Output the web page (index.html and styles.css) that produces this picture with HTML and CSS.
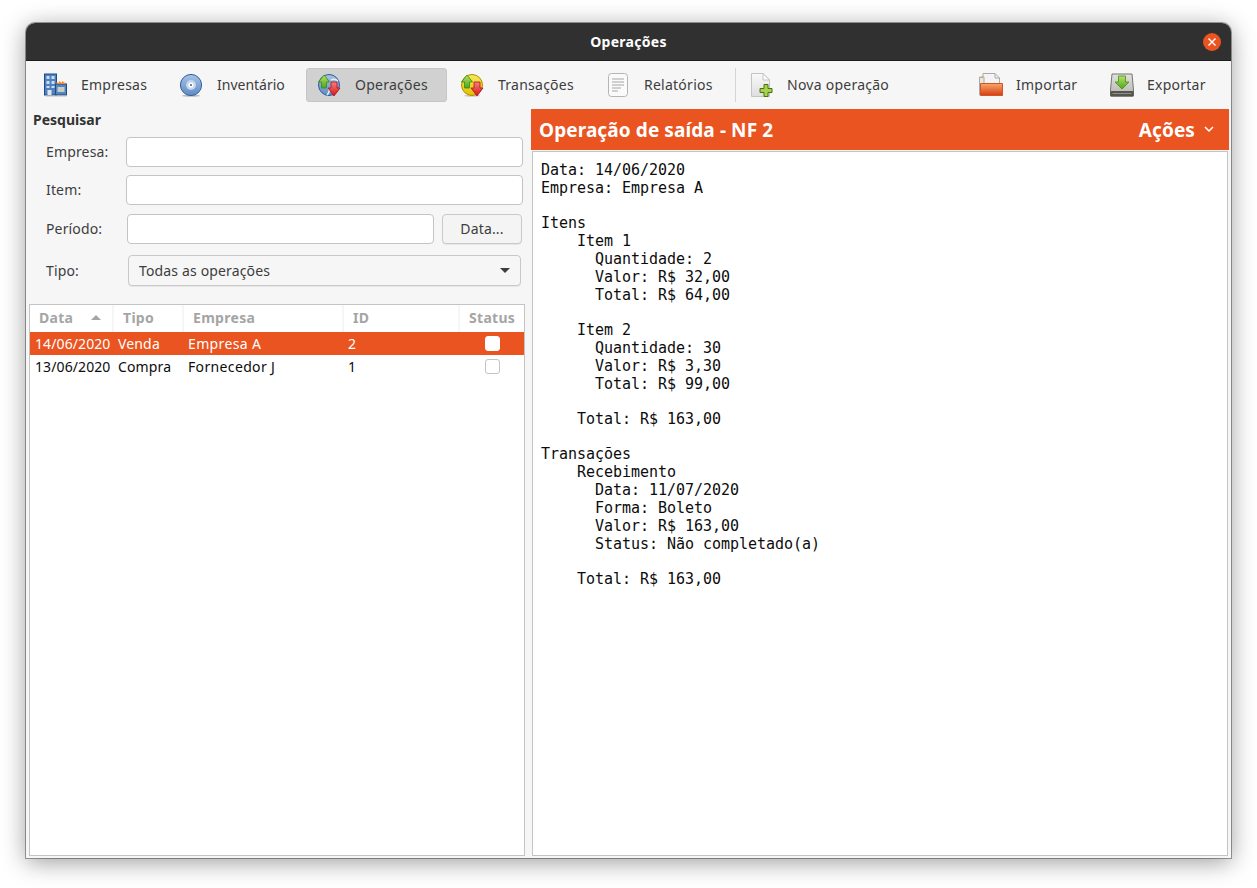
FILE: index.html
```html
<!DOCTYPE html>
<html lang="pt-BR">
<head>
<meta charset="utf-8">
<title>Operações</title>
<link rel="stylesheet" href="styles.css">
</head>
<body>
<svg class="defs" width="0" height="0" aria-hidden="true">
  <defs>
    <linearGradient id="gBlue" x1="0" y1="0" x2="0" y2="1"><stop offset="0" stop-color="#a9c3e4"/><stop offset="1" stop-color="#5f8bc6"/></linearGradient>
    <linearGradient id="gYellow" x1="0" y1="0" x2="0" y2="1"><stop offset="0" stop-color="#f8ea5a"/><stop offset="1" stop-color="#e0bf00"/></linearGradient>
    <linearGradient id="gGreen" x1="0" y1="0" x2="0" y2="1"><stop offset="0" stop-color="#b4e36c"/><stop offset="1" stop-color="#4ea51c"/></linearGradient>
    <linearGradient id="gRed" x1="0" y1="0" x2="0" y2="1"><stop offset="0" stop-color="#f2827c"/><stop offset="1" stop-color="#d9141a"/></linearGradient>
    <linearGradient id="gOrange" x1="0" y1="0" x2="0" y2="1"><stop offset="0" stop-color="#f8a868"/><stop offset="1" stop-color="#d63c14"/></linearGradient>
    <linearGradient id="gGray" x1="0" y1="0" x2="0" y2="1"><stop offset="0" stop-color="#e2e2de"/><stop offset="1" stop-color="#b4b4b0"/></linearGradient>
    <linearGradient id="gPage" x1="0" y1="0" x2="0" y2="1"><stop offset="0" stop-color="#fafafa"/><stop offset="1" stop-color="#dedede"/></linearGradient>
  </defs>
</svg>
<div class="window">
  <header class="titlebar">
    <span class="title">Operações</span>
    <span class="close"><svg width="10" height="10" viewBox="0 0 10 10"><path d="M1.5 1.5l7 7M8.5 1.5l-7 7" stroke="#fff" stroke-width="1.4" fill="none"/></svg></span>
  </header>
  <nav class="toolbar">
    <div class="tool w-emp">
      <svg class="ic" viewBox="0 0 24 24"><g transform="translate(-.5 0)"><rect x="1" y="1" width="12" height="21" fill="#4f80c0" stroke="#1f4a85"/><rect x="12" y="11" width="11" height="11" fill="#5585bd" stroke="#1f4a85"/><path d="M13 11V9l2 1 1-2 2 2 1-2 2 2 1-1v2z" fill="#ef8a2c"/><g fill="#c9dcf0"><rect x="3" y="3" width="3" height="3"/><rect x="8" y="3" width="3" height="3"/><rect x="3" y="8" width="3" height="3"/><rect x="8" y="8" width="3" height="3"/><rect x="3" y="13" width="3" height="2"/><rect x="8" y="13" width="3" height="2"/></g><rect x="4" y="17" width="4" height="5" fill="#dfe5ea"/><rect x="14" y="14" width="7" height="5" fill="#c8ccc8"/><rect x="2" y="22.500" width="21" height="1" fill="#bbb"/></g></svg>
      <span class="lbl">Empresas</span>
    </div>
    <div class="tool w-inv">
      <svg class="ic" viewBox="0 0 24 24"><g transform="translate(-1 0)"><ellipse cx="12" cy="22.800" rx="9" ry="1" fill="#bbb"/><circle cx="12" cy="12" r="10.600" fill="url(#gBlue)" stroke="#33609e"/><circle cx="12" cy="12" r="5" fill="#c4d6ec"/><circle cx="12" cy="12" r="2.600" fill="#fff"/><circle cx="12" cy="12" r="1.100" fill="#3e6aa6"/></g></svg>
      <span class="lbl">Inventário</span>
    </div>
    <div class="tool w-ope active">
      <svg class="ic" viewBox="0 0 24 24"><g transform="translate(-1 0)"><circle cx="12" cy="12" r="10.500" fill="url(#gBlue)" stroke="#2f5a94"/><path d="M14 7q4-2 7 1M12 15q1 4-2 7" fill="none" stroke="#e4ecf5" stroke-width="1.600"/><path d="M7 2L12.500 9H9.500V15H4.500V9H1.500z" fill="url(#gGreen)" stroke="#3c8a14" stroke-width=".8"/><path d="M17 23L23 15H20V9H14V15H11z" fill="url(#gRed)" stroke="#b20f14" stroke-width=".8"/></g></svg>
      <span class="lbl">Operações</span>
    </div>
    <div class="tool w-tra">
      <svg class="ic" viewBox="0 0 24 24"><g transform="translate(-1 0)"><ellipse cx="12" cy="22.800" rx="8" ry="1" fill="#ccc"/><circle cx="12" cy="12" r="10.500" fill="url(#gYellow)" stroke="#b08d00"/><path d="M7 2L12.500 9H9.500V15H4.500V9H1.500z" fill="url(#gGreen)" stroke="#3c8a14" stroke-width=".8"/><path d="M17 23L23 15H20V9H14V15H11z" fill="url(#gRed)" stroke="#b20f14" stroke-width=".8"/></g></svg>
      <span class="lbl">Transações</span>
    </div>
    <div class="tool w-rel">
      <svg class="ic" viewBox="0 0 24 24"><rect x="1.500" y=".5" width="19" height="23" rx="3" fill="#fafafa" stroke="#b5b5b5"/><path d="M5 6h12M5 9h12M5 12h12M5 15h9M5 18h6" stroke="#a6a6a6" stroke-width="1" fill="none"/></svg>
      <span class="lbl">Relatórios</span>
    </div>
    <span class="sep"></span>
    <div class="tool w-nov">
      <svg class="ic" viewBox="0 0 24 24"><path d="M1.500.5H13L19.500 7V23.500H1.500z" fill="url(#gPage)" stroke="#c4c4c4"/><path d="M13 .5V7h6.500z" fill="#fff" stroke="#c4c4c4"/><path d="M14.500 13h4v4h4v4h-4v4h-4v-4h-4v-4h4z" transform="translate(-.5 -1.5)" fill="#a8d24e" stroke="#47730f"/></svg>
      <span class="lbl">Nova operação</span>
    </div>
    <span class="spacer"></span>
    <div class="tool w-imp">
      <svg class="ic" viewBox="0 0 24 24"><path d="M4 .5H16L20.500 5V13H4z" fill="#f4f4f4" stroke="#aaa"/><path d="M16 .5V5h4.500" fill="none" stroke="#aaa"/><path d="M.5 4H5V22H.5z" fill="#e8e8e4" stroke="#aaa"/><path d="M1.500 4.500h2.500" stroke="#ef9a2c"/><path d="M1.500 10.500H23.500V22.500H1.500z" fill="url(#gOrange)" stroke="#d0562a"/></svg>
      <span class="lbl">Importar</span>
    </div>
    <div class="tool w-exp">
      <svg class="ic" viewBox="0 0 24 24"><path d="M2 1H22L23.500 17V23H.5V17z" fill="url(#gGray)" stroke="#75756f"/><rect x=".5" y="18" width="23" height="5.500" rx="1" fill="#55554f"/><rect x="2.500" y="20" width="19" height="1" fill="#8e8e8a"/><path d="M12 16L19 9H15.500V3H8.500V9H5z" fill="url(#gGreen)" stroke="#4b8a16" stroke-width=".8"/></svg>
      <span class="lbl">Exportar</span>
    </div>
  </nav>
  <main class="content">
    <section class="left">
      <h2 class="heading">Pesquisar</h2>
      <div class="row row-1"><label class="field-label l-80">Empresa:</label><div class="input grow"></div></div>
      <div class="row row-2"><label class="field-label l-80">Item:</label><div class="input grow"></div></div>
      <div class="row row-3"><label class="field-label l-81">Período:</label><div class="input grow"></div><div class="btn">Data...</div></div>
      <div class="row row-4"><label class="field-label l-82 flush">Tipo:</label><div class="combo grow"><span>Todas as operações</span><i class="caret"></i></div></div>
      <div class="table">
        <div class="thead">
          <div class="th c-data"><span>Data</span><i class="sort"></i></div>
          <div class="th c-tipo">Tipo</div>
          <div class="th c-emp">Empresa</div>
          <div class="th c-id">ID</div>
          <div class="th c-st">Status</div>
        </div>
        <div class="tr selected">
          <div class="td c-data">14/06/2020</div>
          <div class="td c-tipo">Venda</div>
          <div class="td c-emp">Empresa A</div>
          <div class="td c-id">2</div>
          <div class="td c-st"><i class="check"></i></div>
        </div>
        <div class="tr">
          <div class="td c-data">13/06/2020</div>
          <div class="td c-tipo">Compra</div>
          <div class="td c-emp">Fornecedor J</div>
          <div class="td c-id">1</div>
          <div class="td c-st"><i class="check"></i></div>
        </div>
      </div>
    </section>
    <section class="right">
      <div class="banner">
        <span class="banner-title">Operação de saída - NF 2</span>
        <span class="actions">Ações<svg width="10" height="7" viewBox="0 0 10 7"><path d="M1 1l4 4 4-4" stroke="#fff" stroke-width="1.500" fill="none"/></svg></span>
      </div>
      <div class="doc">
        <div class="ln">Data: 14/06/2020</div>
        <div class="ln">Empresa: Empresa A</div>
        <div class="gap"></div>
        <div class="ln">Itens</div>
        <div class="ln">    Item 1</div>
        <div class="ln">      Quantidade: 2</div>
        <div class="ln">      Valor: R$ 32,00</div>
        <div class="ln">      Total: R$ 64,00</div>
        <div class="gap"></div>
        <div class="ln">    Item 2</div>
        <div class="ln">      Quantidade: 30</div>
        <div class="ln">      Valor: R$ 3,30</div>
        <div class="ln">      Total: R$ 99,00</div>
        <div class="gap"></div>
        <div class="ln">    Total: R$ 163,00</div>
        <div class="gap"></div>
        <div class="ln">Transações</div>
        <div class="ln">    Recebimento</div>
        <div class="ln">      Data: 11/07/2020</div>
        <div class="ln">      Forma: Boleto</div>
        <div class="ln">      Valor: R$ 163,00</div>
        <div class="ln">      Status: Não completado(a)</div>
        <div class="gap"></div>
        <div class="ln">    Total: R$ 163,00</div>
      </div>
    </section>
  </main>
</div>
</body>
</html>
```
FILE: styles.css
```css
* { box-sizing: border-box; }
html, body { margin: 0; height: 100%; background: #fff; }
body { padding: 23px 26px 30px; font-family: "Noto Sans", "Open Sans", sans-serif; font-size: 14px; letter-spacing: .15px; color: #3d3d3d; overflow: hidden; }
.defs { position: absolute; }
.window { height: 835px; display: flex; flex-direction: column; background: #f6f6f6; border-radius: 9px 9px 0 0; box-shadow: 0 0 0 1px rgba(0,0,0,.35), 0 4px 24px rgba(0,0,0,.4); }
.titlebar { height: 38px; flex: none; background: #303030; border-radius: 9px 9px 0 0; border-bottom: 1px solid #1d1d1d; display: flex; align-items: center; justify-content: center; position: relative; }
.title { color: #fff; font-weight: 700; font-size: 14px; letter-spacing: .3px; }
.close { position: absolute; right: 10px; top: 10px; width: 18px; height: 18px; border-radius: 50%; background: #e95420; display: flex; align-items: center; justify-content: center; }
.toolbar { height: 48px; flex: none; display: flex; align-items: center; padding: 0 4px 1px 6px; gap: 3px; }
.tool { height: 34px; display: flex; align-items: center; padding-left: 11px; border: 1px solid transparent; border-radius: 3px; flex: none; }
.tool.active { background: #d1d1d1; border-color: #c6c6c6; }
.ic { width: 24px; height: 24px; flex: none; margin-right: 13px; }
.lbl { white-space: nowrap; letter-spacing: .25px; }
.w-inv .lbl { letter-spacing: 0; }
.w-emp { width: 133px; } .w-inv { width: 135px; } .w-ope { width: 141px; } .w-tra { width: 143px; margin-left: -1px; } .w-rel { width: 135px; }
.w-nov { width: 166px; } .w-imp { width: 128px; } .w-exp { width: 129px; }
.sep { width: 1px; height: 34px; background: #d5d5d5; flex: none; margin: 0 -1px 0 2px; }
.spacer { flex: 1; }
.content { flex: 1; display: flex; min-height: 0; padding: 0 2px 2px 3px; }
.left { width: 502px; flex: none; display: flex; flex-direction: column; }
.heading { margin: 0; height: 28px; padding: 1px 0 0 4px; font-size: 14px; line-height: 20px; font-weight: 700; letter-spacing: 0; color: #333; }
.row { display: flex; align-items: center; flex: none; padding-left: 17px; }
.row-1 { height: 30px; margin-bottom: 8px; padding-right: 8px; }
.row-2 { height: 30px; margin-bottom: 9px; padding-right: 8px; }
.row-3 { height: 30px; margin-bottom: 11px; padding-right: 9px; }
.row-4 { height: 31px; margin-bottom: 18px; padding-right: 10px; }
.field-label { flex: none; padding-bottom: 2px; }
.field-label.flush { padding-bottom: 0; }
.l-80 { width: 80px; } .l-81 { width: 81px; } .l-82 { width: 82px; }
.grow { flex: 1; min-width: 0; }
.input { height: 30px; background: #fff; border: 1px solid #c4c4c4; border-radius: 4px; }
.btn { width: 80px; height: 30px; margin-left: 8px; flex: none; border: 1px solid #c9c9c9; border-radius: 4px; background: #f4f4f4; display: flex; align-items: center; justify-content: center; padding-bottom: 2px; box-shadow: 0 1px 0 rgba(0,0,0,.06); }
.combo { height: 31px; border: 1px solid #c9c9c9; border-radius: 4px; background: #f6f6f6; display: flex; align-items: center; justify-content: space-between; padding: 0 10px; box-shadow: 0 1px 0 rgba(0,0,0,.06); }
.caret { width: 0; height: 0; border-left: 5px solid transparent; border-right: 5px solid transparent; border-top: 5px solid #3d3d3d; }
.table { flex: 1; min-height: 0; width: 496px; background: #fff; border: 1px solid #c4c4c4; }
.thead { height: 27px; display: flex; }
.th { height: 27px; color: #a5a5a5; font-weight: 700; font-size: 14px; letter-spacing: .3px; display: flex; align-items: center; padding: 0 0 2px 9px; border-right: 2px solid #f6f6f6; }
.th:last-child { border-right: 0; }
.tr { height: 23px; display: flex; color: #0c0c0c; }
.tr.selected { background: #e95420; color: #fff; }
.td { display: flex; align-items: center; padding-left: 4px; white-space: nowrap; }
.c-data { width: 84px; } .c-tipo { width: 70px; } .c-emp { width: 160px; } .c-id { width: 116px; } .c-st { flex: 1; }
.td.c-data { padding-left: 5px; letter-spacing: .1px; }
.td.c-emp { letter-spacing: .35px; }
.th.c-data { justify-content: space-between; padding-right: 11px; }
.td.c-st { justify-content: center; padding: 0; }
.sort { width: 0; height: 0; border-left: 5px solid transparent; border-right: 5px solid transparent; border-bottom: 5px solid #a5a5a5; }
.check { width: 15px; height: 15px; border-radius: 3px; background: #fff; border: 1px solid #c4c4c4; }
.selected .check { border-color: #fff; }
.right { flex: 1; min-width: 0; display: flex; flex-direction: column; }
.banner { height: 41px; flex: none; background: #e95420; color: #fff; font-weight: 700; font-size: 19px; letter-spacing: .1px; display: flex; align-items: center; justify-content: space-between; padding: 0 15px 0 8px; }
.actions { display: flex; align-items: center; gap: 9px; }
.doc { flex: 1; min-height: 0; margin: 1px 1px 0 1px; padding: 9px 8px 8px; background: #fff; border: 1px solid #c4c4c4; font-family: "DejaVu Sans Mono", monospace; font-size: 15px; letter-spacing: -.03px; color: #0c0c0c; overflow: hidden; }
.ln { height: 18px; line-height: 18px; white-space: pre; }
.gap { height: 17px; }
```
